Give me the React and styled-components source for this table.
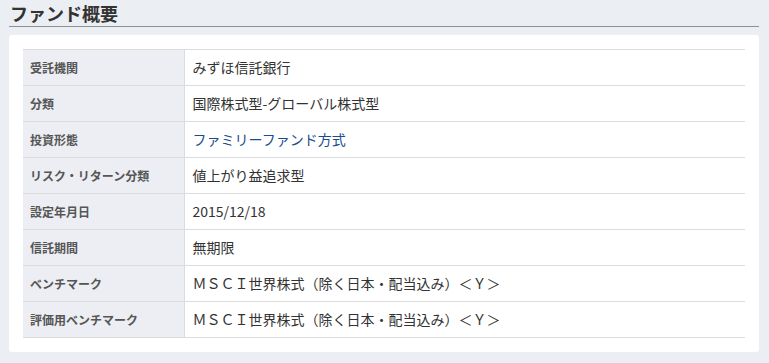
import React from "react";
import styled, { createGlobalStyle } from "styled-components";

const GlobalStyle = createGlobalStyle`
  html, body {
    margin: 0;
    padding: 0;
    background: #ebeef2;
  }
  body {
    font-family: "Noto Sans CJK JP", "Noto Sans", sans-serif;
    color: #333;
  }
`;

const Page = styled.div`
  padding: 2px 10px 11px 9px;
`;

const Title = styled.h2`
  margin: 0;
  padding: 0 0 1px 1px;
  font-size: 18px;
  line-height: 23px;
  font-weight: 700;
  color: #333;
  border-bottom: 1px solid #8e9192;
`;

const Card = styled.section`
  margin-top: 8px;
  background: #fff;
  border-radius: 3px;
  padding: 14px;
`;

const Table = styled.table`
  width: 100%;
  border-collapse: collapse;
  border-top: 1px solid #dcdcdc;
`;

const Row = styled.tr`
  height: 36px;
  border-bottom: 1px solid #dcdcdc;
`;

const Head = styled.th`
  width: 161px;
  box-sizing: border-box;
  padding: 0 7px 1px;
  text-align: left;
  font-size: 12px;
  font-weight: 700;
  color: #555;
  background: #eceef3;
  border-right: 1px solid #dcdcdc;
`;

const Cell = styled.td`
  padding: 0 8px 1px;
  font-size: 14px;
  color: ${(p) => (p.$link ? "#1b4c8f" : "#333")};
`;

const rows = [
  ["受託機関", "みずほ信託銀行"],
  ["分類", "国際株式型-グローバル株式型"],
  ["投資形態", "ファミリーファンド方式", true],
  ["リスク・リターン分類", "値上がり益追求型"],
  ["設定年月日", "2015/12/18"],
  ["信託期間", "無期限"],
  ["ベンチマーク", "ＭＳＣＩ世界株式（除く日本・配当込み）＜Ｙ＞"],
  ["評価用ベンチマーク", "ＭＳＣＩ世界株式（除く日本・配当込み）＜Ｙ＞"],
];

export default function App() {
  return (
    <>
      <GlobalStyle />
      <Page>
        <Title>ファンド概要</Title>
        <Card>
          <Table>
            <tbody>
              {rows.map(([label, value, link]) => (
                <Row key={label}>
                  <Head>{label}</Head>
                  <Cell $link={link}>{value}</Cell>
                </Row>
              ))}
            </tbody>
          </Table>
        </Card>
      </Page>
    </>
  );
}
